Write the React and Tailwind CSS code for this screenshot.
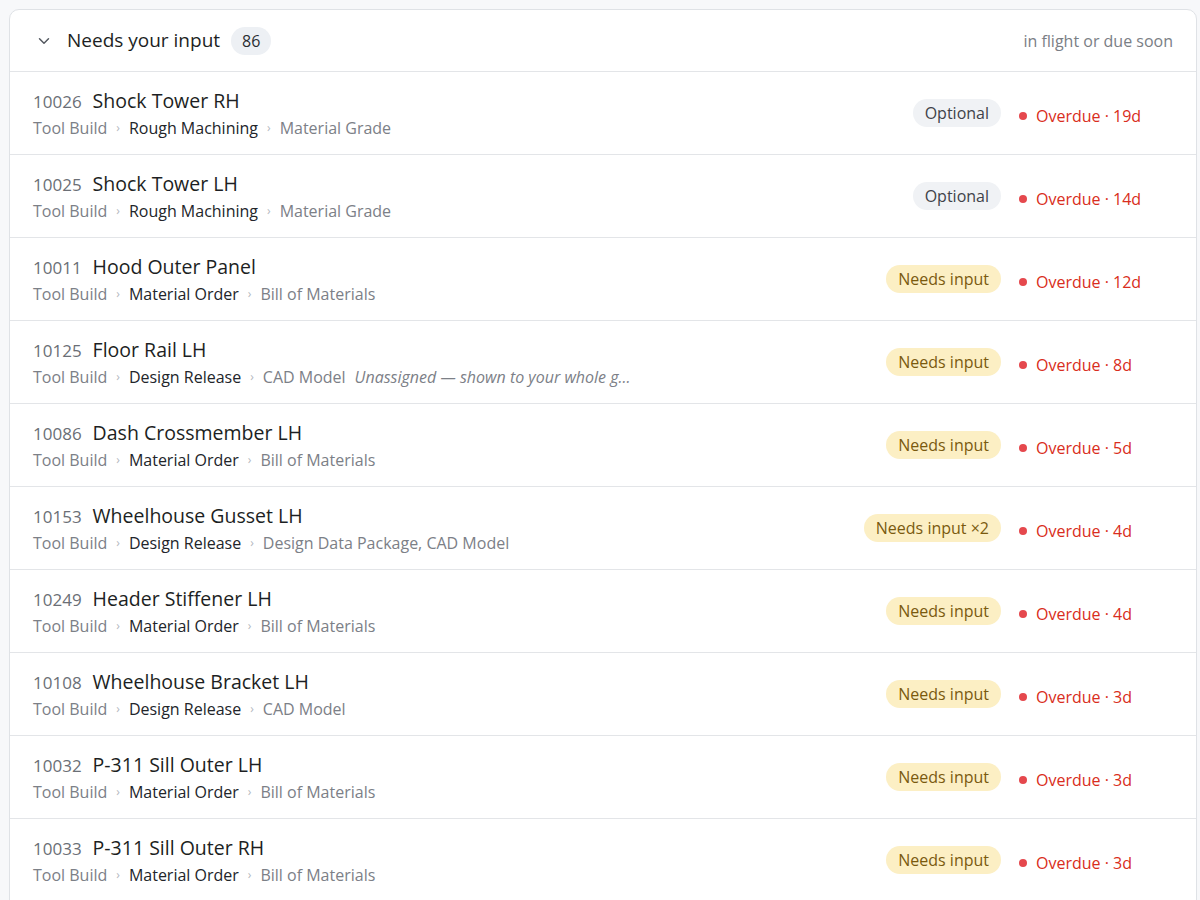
import React from 'react';
import { ChevronDown } from 'lucide-react';

const items = [
  { id: '10026', name: 'Shock Tower RH', stage: 'Rough Machining', doc: 'Material Grade', badge: 'Optional', due: 19 },
  { id: '10025', name: 'Shock Tower LH', stage: 'Rough Machining', doc: 'Material Grade', badge: 'Optional', due: 14 },
  { id: '10011', name: 'Hood Outer Panel', stage: 'Material Order', doc: 'Bill of Materials', badge: 'Needs input', due: 12 },
  { id: '10125', name: 'Floor Rail LH', stage: 'Design Release', doc: 'CAD Model', note: 'Unassigned — shown to your whole g...', badge: 'Needs input', due: 8 },
  { id: '10086', name: 'Dash Crossmember LH', stage: 'Material Order', doc: 'Bill of Materials', badge: 'Needs input', due: 5 },
  { id: '10153', name: 'Wheelhouse Gusset LH', stage: 'Design Release', doc: 'Design Data Package, CAD Model', badge: 'Needs input ×2', due: 4 },
  { id: '10249', name: 'Header Stiffener LH', stage: 'Material Order', doc: 'Bill of Materials', badge: 'Needs input', due: 4 },
  { id: '10108', name: 'Wheelhouse Bracket LH', stage: 'Design Release', doc: 'CAD Model', badge: 'Needs input', due: 3 },
  { id: '10032', name: 'P-311 Sill Outer LH', stage: 'Material Order', doc: 'Bill of Materials', badge: 'Needs input', due: 3 },
  { id: '10033', name: 'P-311 Sill Outer RH', stage: 'Material Order', doc: 'Bill of Materials', badge: 'Needs input', due: 3 },
];

const Sep = () => <span className="mx-[9px] text-[12px] text-[#b4b8be]">›</span>;

const Badge = ({ label }) => {
  const optional = label === 'Optional';
  return (
    <span
      className={
        optional
          ? 'rounded-full bg-[#f0f2f5] px-[12px] h-[28px] flex items-center text-[16px] text-[#3f4349]'
          : 'rounded-full bg-[#fcefc4] px-[12px] h-[28px] flex items-center text-[16px] text-[#7a5a0f]'
      }
    >
      {label}
    </span>
  );
};

const Row = ({ item }) => (
  <div className="flex items-center border-b border-[#e3e5e8] pl-[23px] pr-[24px] pt-[14px] pb-[14px]">
    <div className="flex-1 min-w-0 flex flex-col gap-[4px]">
      <div className="flex items-baseline h-[26px]">
        <span className="text-[17px] text-[#6b6f76] mr-[11px]">{item.id}</span>
        <span className="text-[19.5px] text-[#1d1f23]">{item.name}</span>
      </div>
      <div className="flex items-center h-[24px] text-[16px] whitespace-nowrap">
        <span className="text-[#7c8087]">Tool Build</span>
        <Sep />
        <span className="text-[#22252a]">{item.stage}</span>
        <Sep />
        <span className="text-[#7c8087]">{item.doc}</span>
        {item.note && <span className="ml-[9px] italic text-[#7c8087]">{item.note}</span>}
      </div>
    </div>
    <Badge label={item.badge} />
    <div className="w-[155px] ml-[16px] flex items-center pt-[6px]">
      <span className="w-[8px] h-[8px] rounded-full bg-[#e5484d] ml-[2px] mr-[9px]" />
      <span className="text-[16px] text-[#d92d20]">Overdue · {item.due}d</span>
    </div>
  </div>
);

export default function App() {
  return (
    <div
      className="min-h-screen bg-[#f7f8fa] pl-[9px] pr-[3px] pt-[9px]"
      style={{ fontFamily: '"Open Sans", "Noto Sans", sans-serif' }}
    >
      <div className="bg-white border border-[#dfe2e6] rounded-t-[10px] overflow-hidden">
        <div className="flex items-center h-[62px] border-b border-[#e3e5e8] pl-[25px] pr-[23px]">
          <ChevronDown size={18} strokeWidth={2} className="text-[#555a61] mr-[14px]" />
          <span className="text-[19px] text-[#1d1f23]">Needs your input</span>
          <span className="ml-[11px] rounded-full bg-[#edf0f4] h-[28px] px-[11px] flex items-center text-[16px] text-[#2a2d32]">86</span>
          <span className="ml-auto text-[16px] text-[#7a7e85]">in flight or due soon</span>
        </div>
        {items.map((item) => (
          <Row key={item.id} item={item} />
        ))}
      </div>
    </div>
  );
}
